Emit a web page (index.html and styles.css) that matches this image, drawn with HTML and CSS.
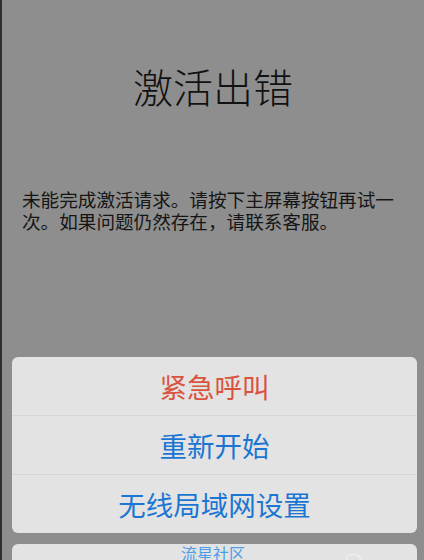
FILE: index.html
```html
<!DOCTYPE html>
<html>
	<head>
		<meta charset="utf-8" />
		<title>激活出错</title>
		<link rel="stylesheet" href="styles.css">
	</head>
	<body>
		<div class="screen">
			<h1 class="title">激活出错</h1>
			<p class="msg">未能完成激活请求。请按下主屏幕按钮再试一次。如果问题仍然存在，请联系客服。</p>
			<ul class="sheet">
				<li class="red">紧急呼叫</li>
				<li>重新开始</li>
				<li>无线局域网设置</li>
			</ul>
			<div class="card">
				<span class="card-text">流星社区</span>
				<span class="heart"></span>
			</div>
		</div>
	</body>
</html>
```

FILE: styles.css
```css
body,h1,p,ul,li{
	margin: 0;
	padding: 0;
}
ul,li{
	list-style: none;
}
body{
	font-family: "Noto Sans CJK SC", "Noto Sans", sans-serif;
}
.screen{
	width: 422px;
	height: 560px;
	border-left: 2px solid #2f2f2f;
	background: #8e8e8e;
	display: flex;
	flex-direction: column;
	overflow: hidden;
}
.screen > *{
	flex-shrink: 0;
}
.title{
	margin-top: 63px;
	font-size: 40px;
	line-height: 46px;
	font-weight: 300;
	text-align: center;
	color: #111;
}
.msg{
	margin-top: 79px;
	padding-left: 20px;
	width: 382px;
	font-size: 18.6px;
	line-height: 22px;
	color: #151515;
}
.sheet{
	margin: 125px 7px 0 10px;
	background: #e3e3e3;
	border-radius: 6px;
	overflow: hidden;
}
.sheet li{
	height: 58px;
	line-height: 58px;
	text-align: center;
	font-size: 27.5px;
	color: #1b76d3;
	border-top: 1px solid #d5d5d5;
}
.sheet li:first-child{
	border-top: none;
}
.sheet .red{
	color: #d9543f;
}
.card{
	margin: 11px 7px 0 10px;
	height: 40px;
	background: #e3e3e3;
	border-radius: 6px 6px 0 0;
	position: relative;
}
.card-text{
	display: block;
	padding-left: 169px;
	font-size: 16px;
	line-height: 18px;
	color: #4c9de8;
}
.heart{
	position: absolute;
	left: 334px;
	top: 10px;
	width: 13px;
	height: 8px;
	border: 1px solid #f2f2f2;
	border-bottom: none;
	border-radius: 6px 6px 0 0;
}
```
